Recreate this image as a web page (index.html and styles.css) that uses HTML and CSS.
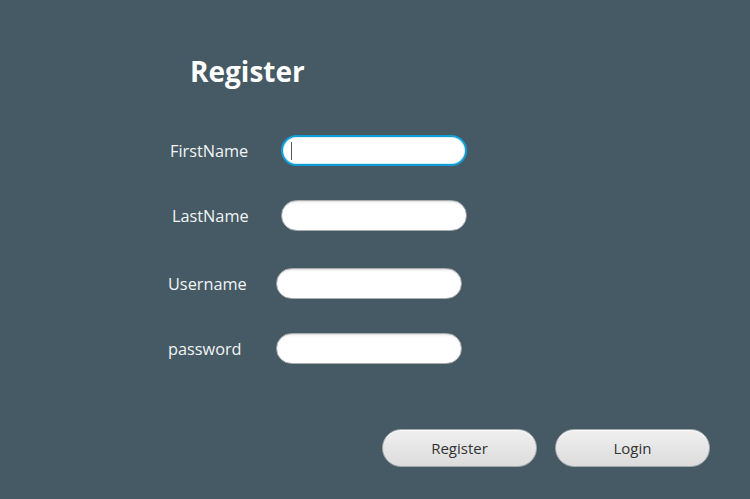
FILE: index.html
```html
<!DOCTYPE html>
<html>
<head>
<meta charset="utf-8">
<link rel="stylesheet" href="styles.css">
</head>
<body>
<div class="page">
  <h1 class="title">Register</h1>
  <div class="form">
    <div class="row row-1">
      <label class="label">FirstName</label>
      <span class="field-wrap">
        <input class="field focused" type="text">
        <span class="caret"></span>
      </span>
    </div>
    <div class="row row-2">
      <label class="label">LastName</label>
      <input class="field" type="text">
    </div>
    <div class="row row-3">
      <label class="label">Username</label>
      <input class="field" type="text">
    </div>
    <div class="row row-4">
      <label class="label">password</label>
      <input class="field" type="password">
    </div>
  </div>
  <div class="actions">
    <button class="btn">Register</button>
    <button class="btn">Login</button>
  </div>
</div>
</body>
</html>
```
FILE: styles.css
```css
html, body {
  margin: 0;
  padding: 0;
}
body {
  width: 750px;
  height: 499px;
  overflow: hidden;
  background: #455a64;
  font-family: "Open Sans", "Noto Sans", sans-serif;
}
.page {
  display: flex;
  flex-direction: column;
  padding-top: 53px;
}
.title {
  margin: 0 0 0 190px;
  font-size: 28px;
  font-weight: 700;
  line-height: 36px;
  color: #ffffff;
}
.form {
  display: flex;
  flex-direction: column;
  margin-top: 46px;
}
.row {
  display: flex;
  align-items: center;
  height: 31px;
}
.label {
  color: #f2f4f5;
  font-size: 16.3px;
  line-height: 20px;
  box-sizing: border-box;
}
.row-1 .label { margin-left: 170px; width: 111px; }
.row-2 { margin-top: 34px; }
.row-2 .label { margin-left: 172px; width: 109px; }
.row-3 { margin-top: 37px; }
.row-3 .label { margin-left: 168px; width: 108px; }
.row-4 { margin-top: 34px; }
.row-4 .label { margin-left: 168px; width: 108px; }
.field-wrap {
  position: relative;
  display: block;
}
.field {
  display: block;
  box-sizing: border-box;
  width: 186px;
  height: 31px;
  margin: 0;
  padding: 0 10px;
  border: 1px solid #a9adb0;
  border-radius: 16px;
  background: linear-gradient(#f4f4f4 0, #ffffff 4px, #ffffff 100%);
  box-shadow: inset 0 1px 1px rgba(0,0,0,0.08);
  outline: none;
  font-family: inherit;
  font-size: 15px;
}
.field.focused {
  border: 2px solid #0f9fd6;
  box-shadow: inset 0 0 0 1px #d8eef7;
  background: #ffffff;
}
.caret {
  position: absolute;
  left: 10px;
  top: 7px;
  width: 1px;
  height: 18px;
  background: #555;
}
.actions {
  display: flex;
  gap: 18px;
  margin-top: 65px;
  margin-left: 382px;
}
.btn {
  box-sizing: border-box;
  width: 155px;
  height: 38px;
  margin: 0;
  padding: 0;
  border: 1px solid #a4a7a9;
  border-radius: 19px;
  background: linear-gradient(#f0f0f0, #dcdcdc);
  box-shadow: inset 0 1px 0 #fbfbfb;
  color: #333333;
  font-family: "Open Sans", "Noto Sans", sans-serif;
  font-size: 15px;
}
```
